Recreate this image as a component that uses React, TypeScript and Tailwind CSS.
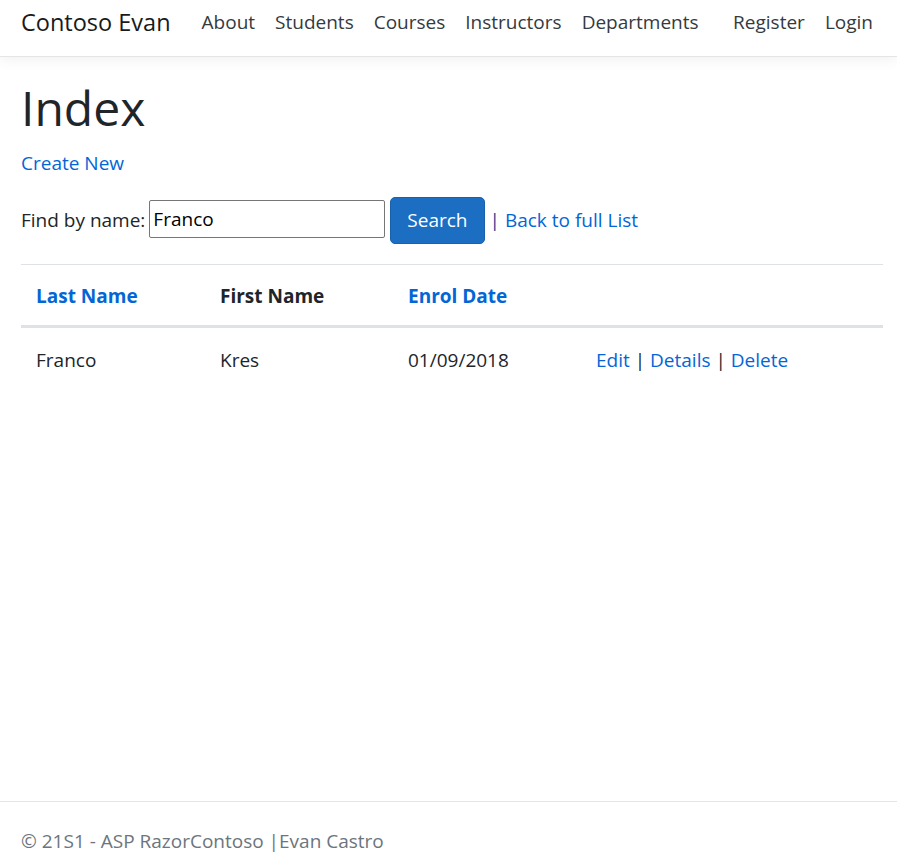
const navLinks = ['About', 'Students', 'Courses', 'Instructors', 'Departments'];

function Navbar() {
  return (
    <header className="h-[57px] border-b border-[#e5e5e5] shadow-[0_4px_12px_rgba(0,0,0,0.05)] bg-white">
      <nav className="flex items-start h-full pt-[6px] pl-[21px] pr-[14px]">
        <a className="text-[23.5px] leading-[32px] text-[#1a1a1a] mr-[21px] whitespace-nowrap">Contoso Evan</a>
        <ul className="flex flex-1 pt-[1px]">
          {navLinks.map((l) => (
            <li key={l}>
              <a className="block px-[10px] text-[19px] leading-[30px] text-[#343a40]">{l}</a>
            </li>
          ))}
        </ul>
        <ul className="flex pt-[1px]">
          <li><a className="block px-[10px] text-[19px] leading-[30px] text-[#343a40]">Register</a></li>
          <li><a className="block px-[10px] text-[19px] leading-[30px] text-[#343a40]">Login</a></li>
        </ul>
      </nav>
    </header>
  );
}

function StudentTable() {
  return (
    <table className="w-full border-collapse text-left text-[19px]">
      <thead>
        <tr className="border-t border-[#dee2e6]">
          <th className="w-[184px] px-[15px] pt-[17px] pb-[14px] font-bold border-b-[3px] border-[#dee2e6]">
            <a className="text-[#0366d6]">Last Name</a>
          </th>
          <th className="w-[188px] px-[15px] pt-[17px] pb-[14px] font-bold text-[#212529] border-b-[3px] border-[#dee2e6]">
            First Name
          </th>
          <th className="w-[188px] px-[15px] pt-[17px] pb-[14px] font-bold border-b-[3px] border-[#dee2e6]">
            <a className="text-[#0366d6]">Enrol Date</a>
          </th>
          <th className="px-[15px] border-b-[3px] border-[#dee2e6]"></th>
        </tr>
      </thead>
      <tbody>
        <tr>
          <td className="px-[15px] pt-[18px] pb-[15px]">Franco</td>
          <td className="px-[15px] pt-[18px] pb-[15px]">Kres</td>
          <td className="px-[15px] pt-[18px] pb-[15px]">01/09/2018</td>
          <td className="px-[15px] pt-[18px] pb-[15px]">
            <a className="text-[#0366d6]">Edit</a> | <a className="text-[#0366d6]">Details</a> |{' '}
            <a className="text-[#0366d6]">Delete</a>
          </td>
        </tr>
      </tbody>
    </table>
  );
}

export default function App() {
  return (
    <div
      className="min-h-[862px] flex flex-col bg-white text-[#212529] text-[19px]"
      style={{ fontFamily: '"Open Sans", "Noto Sans", sans-serif' }}
    >
      <Navbar />
      <main className="flex-1 pl-[21px] pr-[14px] pt-[22px]">
        <h1 className="text-[48px] font-medium leading-[1.2] mb-[12px]">Index</h1>
        <p className="mb-[20px]">
          <a className="text-[#0366d6]">Create New</a>
        </p>
        <form className="flex items-center mb-[20px]">
          <span className="mr-[4px]">Find by name:</span>
          <input
            defaultValue="Franco"
            className="w-[236px] h-[38px] -mt-[4px] border border-[#767676] rounded-[2px] px-[3px] text-[19px] text-black"
          />
          <button
            type="button"
            className="ml-[5px] mr-[5px] h-[47px] px-[16px] rounded-[5px] bg-[#1b6ec2] border border-[#1861ac] text-white text-[19px]"
          >
            Search
          </button>
          <span className="text-[#0366d6]">
            <span className="text-[#1f3a93]">|</span> Back to full List
          </span>
        </form>
        <StudentTable />
      </main>
      <footer className="h-[61px] border-t border-[#e5e5e5] pl-[21px] flex items-center pt-[18px] text-[#6c757d] text-[19px]">
        © 21S1 - ASP RazorContoso |Evan Castro
      </footer>
    </div>
  );
}
